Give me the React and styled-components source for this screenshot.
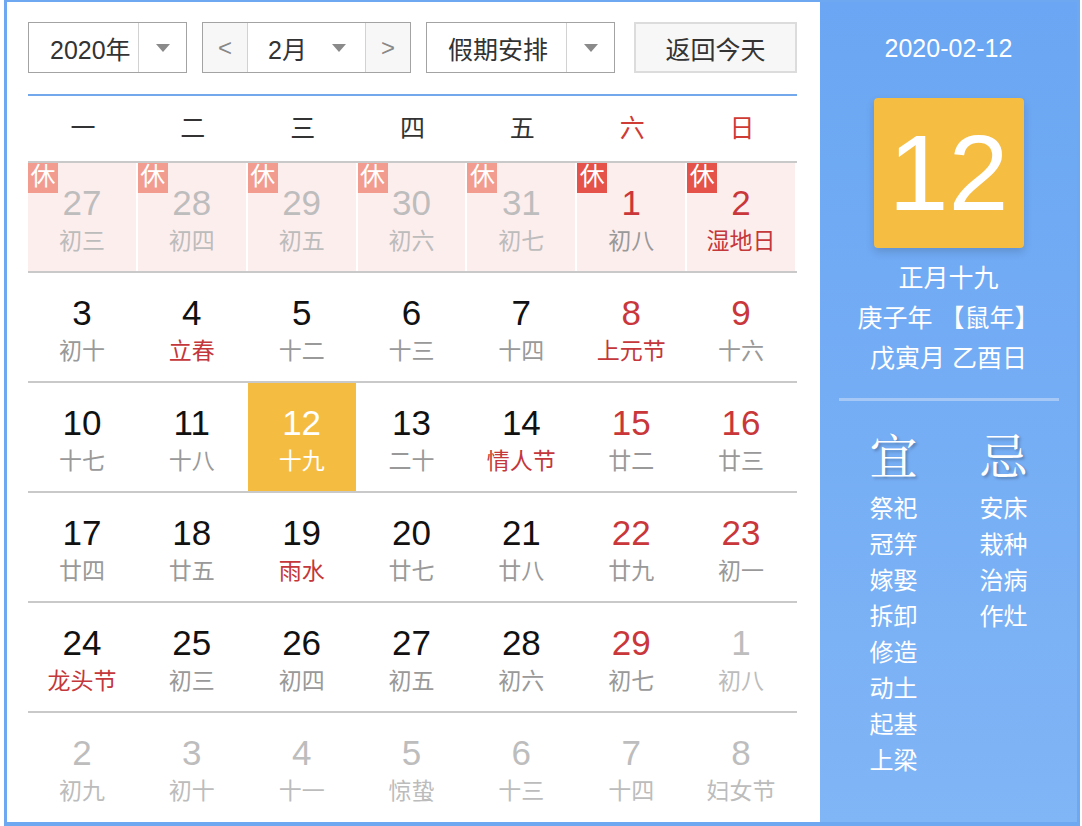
import React from 'react'
import styled, { createGlobalStyle } from 'styled-components'

const GlobalStyle = createGlobalStyle`
    body {
        margin: 0;
        background: #fff;
        font-family: "Liberation Sans", "Noto Sans CJK SC", sans-serif;
    }
`

const StWrap = styled.div`
    box-sizing: border-box;
    margin-left: 4px;
    width: 1076px;
    height: 826px;
    border: 3px solid #6ea8f1;
    border-top-width: 2px;
    border-bottom-width: 4px;
    display: flex;
`

const StMain = styled.div`
    width: 769px;
    padding: 20px 23px 0 21px;
    background: #fff;
`

const StToolbar = styled.div`
    display: flex;
    height: 51px;
`

const StSelect = styled.div`
    box-sizing: border-box;
    display: flex;
    width: ${(p) => p.$w}px;
    margin-right: ${(p) => p.$mr || 0}px;
    border: 1px solid #a3a3a3;
    background: #fff;
`

const StSelectText = styled.div`
    flex: 1;
    display: flex;
    align-items: center;
    padding-left: ${(p) => p.$pl}px;
    font-size: 25px;
    color: #333;
`

const StCaretBox = styled.div`
    width: 47px;
    display: flex;
    align-items: center;
    justify-content: center;
    border-left: ${(p) => (p.$line ? '1px solid #d2d2d2' : 'none')};
`

const StArrowBtn = styled.div`
    width: 44px;
    display: flex;
    align-items: center;
    justify-content: center;
    background: #f7f7f7;
    color: #888;
    font-size: 24px;
    border-left: ${(p) => (p.$side === 'right' ? '1px solid #d2d2d2' : 'none')};
    border-right: ${(p) => (p.$side === 'left' ? '1px solid #d2d2d2' : 'none')};
`

const StMonth = styled.div`
    flex: 1;
    display: flex;
    align-items: center;
    justify-content: space-between;
    padding: 0 19px 0 20px;
    font-size: 25px;
    color: #333;
`

const StTodayBtn = styled.div`
    box-sizing: border-box;
    width: 163px;
    display: flex;
    align-items: center;
    justify-content: center;
    border: 2px solid #dcdcdc;
    background: #f7f7f7;
    font-size: 25px;
    color: #333;
`

const StBlueLine = styled.div`
    height: 2px;
    margin-top: 21px;
    background: #73a9ec;
`

const StWeekHead = styled.div`
    display: grid;
    grid-template-columns: repeat(7, 1fr);
    height: 65px;
    border-bottom: 2px solid #c9c9c9;
`

const StWeekDay = styled.div`
    display: flex;
    align-items: center;
    justify-content: center;
    padding-bottom: 6px;
    font-size: 25px;
    color: ${(p) => (p.$red ? '#cf3b35' : '#333')};
`

const StRow = styled.div`
    display: grid;
    grid-template-columns: repeat(7, 1fr);
    border-bottom: ${(p) => (p.$last ? 'none' : '2px solid #c9c9c9')};
`

const cellBg = { holiday: '#fdeeee', today: '#f5bc42' }

const StCell = styled.div`
    position: relative;
    height: 108px;
    box-sizing: border-box;
    padding-top: 21px;
    text-align: center;
    border-right: 2px solid transparent;
    background: ${(p) => cellBg[p.$bg] || 'transparent'};
    background-clip: padding-box;
`

const numColor = {
    normal: '#111',
    weekend: '#c9373b',
    faded: '#bdbdbd',
    today: '#fff',
}

const lunarColor = {
    normal: '#999',
    fest: '#c4373a',
    faded: '#bcbcbc',
    today: '#fff',
}

const StNum = styled.div`
    font-size: 35px;
    line-height: 38px;
    color: ${(p) => numColor[p.$c]};
`

const StLunar = styled.div`
    font-size: 23px;
    line-height: 38px;
    color: ${(p) => lunarColor[p.$c]};
`

const StBadge = styled.span`
    position: absolute;
    top: 0;
    left: 0;
    width: 30px;
    height: 30px;
    line-height: 27px;
    font-size: 25px;
    text-align: center;
    color: #fff;
    background: ${(p) => (p.$strong ? '#e5524a' : '#f29c90')};
`

const StSide = styled.div`
    flex: 1;
    display: flex;
    flex-direction: column;
    align-items: center;
    padding-top: 31px;
    color: #fff;
    background: linear-gradient(#6aa6f3, #80b5f6);
`

const StDate = styled.div`
    font-size: 25px;
    line-height: 30px;
`

const StBigDay = styled.div`
    margin-top: 35px;
    width: 150px;
    height: 150px;
    border-radius: 4px;
    background: #f5bd42;
    box-shadow: 0 4px 8px rgba(0, 0, 0, 0.15);
    font-size: 108px;
    line-height: 150px;
    text-align: center;
`

const StLunarInfo = styled.div`
    margin-top: 10px;
    font-size: 25px;
    line-height: 40px;
    text-align: center;
`

const StDivider = styled.div`
    margin-top: 20px;
    width: 220px;
    height: 3px;
    background: #a6c8f7;
`

const StAdvice = styled.div`
    display: flex;
    gap: 62px;
    margin-top: 28px;
`

const StAdviceCol = styled.div`
    display: flex;
    flex-direction: column;
    align-items: center;
`

const StAdviceHead = styled.div`
    font-family: "Noto Serif CJK SC", "Noto Sans CJK SC", serif;
    font-size: 48px;
    line-height: 50px;
    margin-bottom: 12px;
    text-shadow: 2px 2px 3px rgba(0, 0, 0, 0.25);
`

const StAdviceItem = styled.div`
    font-size: 24px;
    line-height: 36px;
`

const Caret = () => (
    <svg width="14" height="8" viewBox="0 0 14 8">
        <path d="M0 0 H14 L7 8 Z" fill="#8a8a8a" />
    </svg>
)

const weeks = [
    [
        { d: 27, l: '初三', n: 'faded', lc: 'faded', h: 'light' },
        { d: 28, l: '初四', n: 'faded', lc: 'faded', h: 'light' },
        { d: 29, l: '初五', n: 'faded', lc: 'faded', h: 'light' },
        { d: 30, l: '初六', n: 'faded', lc: 'faded', h: 'light' },
        { d: 31, l: '初七', n: 'faded', lc: 'faded', h: 'light' },
        { d: 1, l: '初八', n: 'weekend', lc: 'normal', h: 'strong' },
        { d: 2, l: '湿地日', n: 'weekend', lc: 'fest', h: 'strong' },
    ],
    [
        { d: 3, l: '初十' },
        { d: 4, l: '立春', lc: 'fest' },
        { d: 5, l: '十二' },
        { d: 6, l: '十三' },
        { d: 7, l: '十四' },
        { d: 8, l: '上元节', n: 'weekend', lc: 'fest' },
        { d: 9, l: '十六', n: 'weekend' },
    ],
    [
        { d: 10, l: '十七' },
        { d: 11, l: '十八' },
        { d: 12, l: '十九', n: 'today', lc: 'today', today: true },
        { d: 13, l: '二十' },
        { d: 14, l: '情人节', lc: 'fest' },
        { d: 15, l: '廿二', n: 'weekend' },
        { d: 16, l: '廿三', n: 'weekend' },
    ],
    [
        { d: 17, l: '廿四' },
        { d: 18, l: '廿五' },
        { d: 19, l: '雨水', lc: 'fest' },
        { d: 20, l: '廿七' },
        { d: 21, l: '廿八' },
        { d: 22, l: '廿九', n: 'weekend' },
        { d: 23, l: '初一', n: 'weekend' },
    ],
    [
        { d: 24, l: '龙头节', lc: 'fest' },
        { d: 25, l: '初三' },
        { d: 26, l: '初四' },
        { d: 27, l: '初五' },
        { d: 28, l: '初六' },
        { d: 29, l: '初七', n: 'weekend' },
        { d: 1, l: '初八', n: 'faded', lc: 'faded' },
    ],
    [
        { d: 2, l: '初九', n: 'faded', lc: 'faded' },
        { d: 3, l: '初十', n: 'faded', lc: 'faded' },
        { d: 4, l: '十一', n: 'faded', lc: 'faded' },
        { d: 5, l: '惊蛰', n: 'faded', lc: 'faded' },
        { d: 6, l: '十三', n: 'faded', lc: 'faded' },
        { d: 7, l: '十四', n: 'faded', lc: 'faded' },
        { d: 8, l: '妇女节', n: 'faded', lc: 'faded' },
    ],
]

const weekNames = ['一', '二', '三', '四', '五', '六', '日']
const good = ['祭祀', '冠笄', '嫁娶', '拆卸', '修造', '动土', '起基', '上梁']
const bad = ['安床', '栽种', '治病', '作灶']

const App = () => {
    return (
        <>
            <GlobalStyle />
            <StWrap>
                <StMain>
                    <StToolbar>
                        <StSelect $w={159} $mr={15}>
                            <StSelectText $pl={21}>2020年</StSelectText>
                            <StCaretBox $line>
                                <Caret />
                            </StCaretBox>
                        </StSelect>
                        <StSelect $w={209} $mr={15}>
                            <StArrowBtn $side="left">&lt;</StArrowBtn>
                            <StMonth>
                                <span>2月</span>
                                <Caret />
                            </StMonth>
                            <StArrowBtn $side="right">&gt;</StArrowBtn>
                        </StSelect>
                        <StSelect $w={189} $mr={19}>
                            <StSelectText $pl={21}>假期安排</StSelectText>
                            <StCaretBox $line>
                                <Caret />
                            </StCaretBox>
                        </StSelect>
                        <StTodayBtn>返回今天</StTodayBtn>
                    </StToolbar>
                    <StBlueLine />
                    <StWeekHead>
                        {weekNames.map((w, i) => (
                            <StWeekDay key={w} $red={i > 4}>{w}</StWeekDay>
                        ))}
                    </StWeekHead>
                    {weeks.map((week, wi) => (
                        <StRow key={wi} $last={wi === weeks.length - 1}>
                            {week.map((c, ci) => (
                                <StCell key={ci} $bg={c.today ? 'today' : c.h ? 'holiday' : ''}>
                                    {c.h && <StBadge $strong={c.h === 'strong'}>休</StBadge>}
                                    <StNum $c={c.n || 'normal'}>{c.d}</StNum>
                                    <StLunar $c={c.lc || 'normal'}>{c.l}</StLunar>
                                </StCell>
                            ))}
                        </StRow>
                    ))}
                </StMain>
                <StSide>
                    <StDate>2020-02-12</StDate>
                    <StBigDay>12</StBigDay>
                    <StLunarInfo>
                        <div>正月十九</div>
                        <div>庚子年 【鼠年】</div>
                        <div>戊寅月 乙酉日</div>
                    </StLunarInfo>
                    <StDivider />
                    <StAdvice>
                        <StAdviceCol>
                            <StAdviceHead>宜</StAdviceHead>
                            {good.map((g) => (
                                <StAdviceItem key={g}>{g}</StAdviceItem>
                            ))}
                        </StAdviceCol>
                        <StAdviceCol>
                            <StAdviceHead>忌</StAdviceHead>
                            {bad.map((b) => (
                                <StAdviceItem key={b}>{b}</StAdviceItem>
                            ))}
                        </StAdviceCol>
                    </StAdvice>
                </StSide>
            </StWrap>
        </>
    )
}
export default App
